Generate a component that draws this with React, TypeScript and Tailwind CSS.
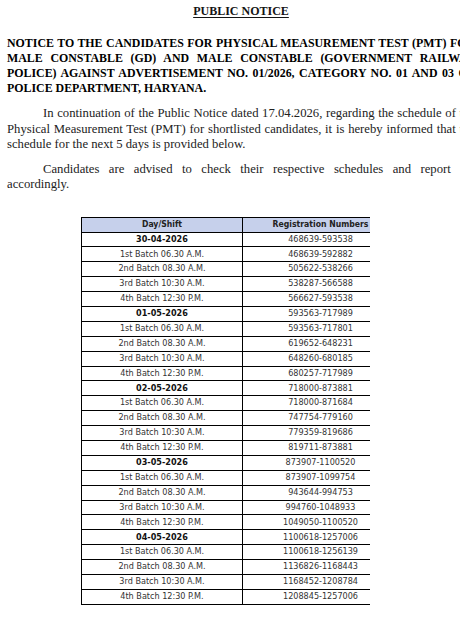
const schedule = [
  {
    date: '30-04-2026',
    range: '468639-593538',
    batches: ['468639-592882', '505622-538266', '538287-566588', '566627-593538'],
  },
  {
    date: '01-05-2026',
    range: '593563-717989',
    batches: ['593563-717801', '619652-648231', '648260-680185', '680257-717989'],
  },
  {
    date: '02-05-2026',
    range: '718000-873881',
    batches: ['718000-871684', '747754-779160', '779359-819686', '819711-873881'],
  },
  {
    date: '03-05-2026',
    range: '873907-1100520',
    batches: ['873907-1099754', '943644-994753', '994760-1048933', '1049050-1100520'],
  },
  {
    date: '04-05-2026',
    range: '1100618-1257006',
    batches: ['1100618-1256139', '1136826-1168443', '1168452-1208784', '1208845-1257006'],
  },
];

const slots = ['1st Batch 06.30 A.M.', '2nd Batch 08.30 A.M.', '3rd Batch 10:30 A.M.', '4th Batch 12:30 P.M.'];

const serif = "font-['Liberation_Serif','DejaVu_Serif',serif]";
const table = "font-['DejaVu_Sans_Condensed','DejaVu_Sans',sans-serif]";

function Line({ text, justify = true, indent = false }: { text: string; justify?: boolean; indent?: boolean }) {
  return (
    <div
      className={`whitespace-nowrap ${indent ? 'pl-[36px]' : ''} ${
        justify ? 'text-justify [text-align-last:justify]' : 'text-left'
      }`}
    >
      {text}
    </div>
  );
}

function Row({ left, right, bold = false }: { left: string; right: string; bold?: boolean }) {
  return (
    <div className="flex h-[14.9px] border-b border-black items-center">
      <div className={`w-[161px] h-full border-r border-black flex items-center justify-center ${bold ? 'font-bold text-[#111]' : ''}`}>
        {left}
      </div>
      <div className="flex-1 flex items-center justify-center">{right}</div>
    </div>
  );
}

export default function App() {
  return (
    <div className="w-[460px] h-[619px] bg-white overflow-hidden relative">
      <div className={`w-[468px] ml-[7px] ${serif} text-[#141414]`}>
        <div className="pt-[4px] text-center font-bold text-[12px] leading-[15px] underline underline-offset-2">
          PUBLIC NOTICE
        </div>

        <div className="mt-[17px] font-bold text-[11.9px] leading-[15px] text-black">
          <Line text="NOTICE TO THE CANDIDATES FOR PHYSICAL MEASUREMENT TEST (PMT) FOR" />
          <Line text="MALE CONSTABLE (GD) AND MALE CONSTABLE (GOVERNMENT RAILWAY" />
          <Line text="POLICE) AGAINST ADVERTISEMENT NO. 01/2026, CATEGORY NO. 01 AND 03 OF" />
          <Line text="POLICE DEPARTMENT, HARYANA." justify={false} />
        </div>

        <div className="mt-[10px] text-[12.7px] leading-[15.5px] text-[#222]">
          <Line indent text="In continuation of the Public Notice dated 17.04.2026, regarding the schedule of the" />
          <Line text="Physical Measurement Test (PMT) for shortlisted candidates, it is hereby informed that the" />
          <Line text="schedule for the next 5 days is provided below." justify={false} />
        </div>

        <div className="mt-[9px] text-[12.7px] leading-[15.5px] text-[#222]">
          <Line indent text="Candidates are advised to check their respective schedules and report for" />
          <Line text="accordingly." justify={false} />
        </div>
      </div>

      <div className={`mt-[24px] ml-[81px] w-[289px] overflow-hidden ${table} text-[9px] text-[#333]`}>
        <div className="w-[317px] border-l border-t border-black">
          <div className="flex h-[15px] border-b border-black bg-[#c6d0eb] font-bold text-[8.6px] text-[#222]">
            <div className="w-[161px] border-r border-black flex items-center justify-center">Day/Shift</div>
            <div className="flex-1 flex items-center justify-center">Registration Numbers</div>
          </div>
          {schedule.map((day) => (
            <div key={day.date}>
              <Row left={day.date} right={day.range} bold />
              {day.batches.map((r, i) => (
                <Row key={r} left={slots[i]} right={r} />
              ))}
            </div>
          ))}
        </div>
      </div>
    </div>
  );
}
